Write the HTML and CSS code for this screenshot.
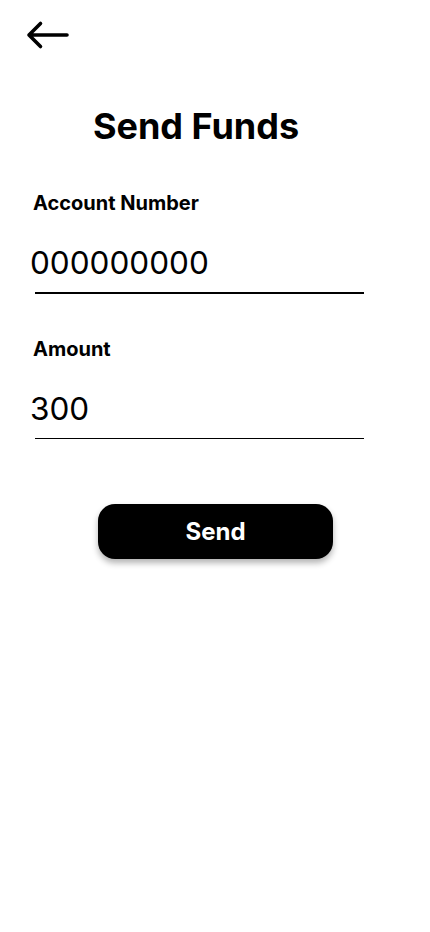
FILE: index.html
```html
<!DOCTYPE html>
<html>
<head>
<meta charset="utf-8">
<link rel="stylesheet" href="styles.css">
</head>
<body>
<div class="screen">
  <header class="topbar">
    <svg class="back" width="46" height="34" viewBox="0 0 46 34">
      <path d="M42 16 H4 M15.5 4.5 L4 16 L15.5 27.5" fill="none" stroke="#000" stroke-width="3.6" stroke-linecap="round" stroke-linejoin="round"/>
    </svg>
  </header>
  <h1 class="title">Send Funds</h1>
  <div class="field first">
    <div class="label">Account Number</div>
    <div class="value">000000000</div>
    <div class="line"></div>
  </div>
  <div class="field">
    <div class="label">Amount</div>
    <div class="value">300</div>
    <div class="line"></div>
  </div>
  <div class="actions">
    <button class="send">Send</button>
  </div>
</div>
</body>
</html>
```
FILE: styles.css
```css
* { box-sizing: border-box; }
html, body { margin: 0; padding: 0; background: #fff; }
body { font-family: Inter, "Noto Sans", sans-serif; color: #000; }
.screen { width: 430px; height: 932px; display: flex; flex-direction: column; }
.topbar { padding: 19px 0 0 25px; height: 52px; }
.back { display: block; }
.title { margin: 54px 0 0 0; width: 392px; text-align: center; font-size: 36px; font-weight: 700; line-height: 40px; }
.field { display: flex; flex-direction: column; padding-left: 30px; }
.field.first { margin-top: 45px; }
.field + .field { margin-top: 43px; }
.label { font-size: 20px; font-weight: 700; line-height: 24px; padding-left: 3px; }
.value { font-size: 31.5px; font-weight: 400; line-height: 40px; margin-top: 28px; }
.line { width: 329px; height: 1.5px; background: #000; margin-left: 5px; margin-top: 9px; }
.actions { display: flex; padding-left: 98px; margin-top: 65px; }
.send { width: 235px; height: 55px; border: none; border-radius: 17px; background: #000; color: #fff; font-family: Inter, sans-serif; font-size: 24px; font-weight: 700; box-shadow: 0 4px 6px rgba(0,0,0,0.3); }
```
